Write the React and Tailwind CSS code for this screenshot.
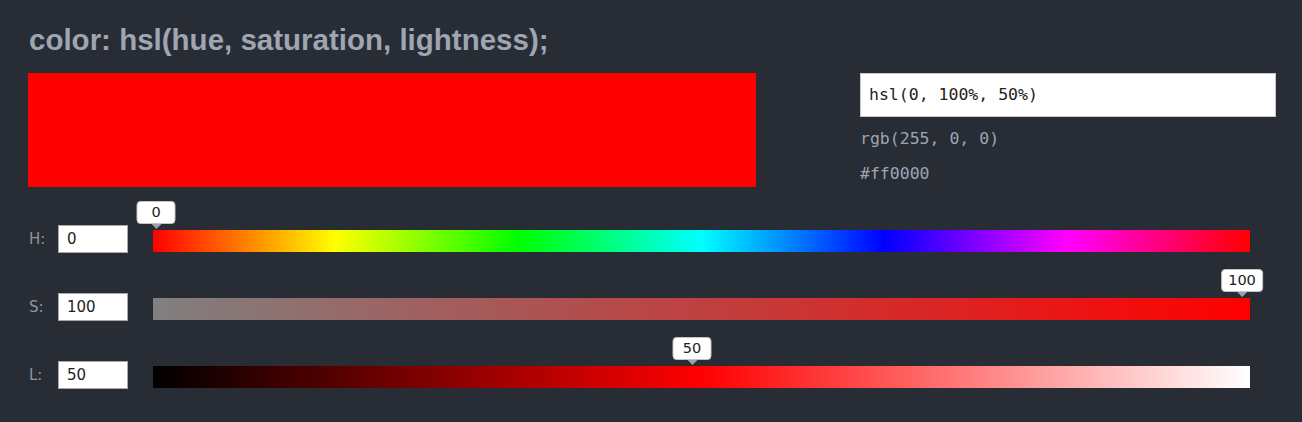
const rows = [
  {
    label: "H:",
    value: "0",
    tip: 3,
    bar: "linear-gradient(to right, #ff0000 0%, #ffff00 16.67%, #00ff00 33.33%, #00ffff 50%, #0000ff 66.67%, #ff00ff 83.33%, #ff0000 100%)",
  },
  {
    label: "S:",
    value: "100",
    tip: 1089,
    bar: "linear-gradient(to right, #808080, #ff0000)",
  },
  {
    label: "L:",
    value: "50",
    tip: 539,
    bar: "linear-gradient(to right, #000000, #ff0000 50%, #ffffff)",
  },
];

function SliderRow({ label, value, tip, bar }) {
  return (
    <div className="flex items-start">
      <span className="w-[30px] pl-[1px] pt-[3px] text-[15px] leading-[22px] text-[#8d96a5] [font-family:'DejaVu_Sans',sans-serif]">
        {label}
      </span>
      <div className="flex h-[28px] w-[70px] items-center border border-[#a9a9a9] bg-white pl-[8px] text-[15px] text-[#222] [font-family:'DejaVu_Sans',sans-serif]">
        {value}
      </div>
      <div className="relative ml-[25px] mt-[5px] h-[22px] w-[1097px]" style={{ background: bar }}>
        <div
          className="absolute bottom-[calc(100%+1px)] flex -translate-x-1/2 flex-col items-center"
          style={{ left: tip }}
        >
          <div className="flex h-[23px] min-w-[39px] items-center justify-center rounded-[4px] border border-[#c4c4c4] bg-white px-[6px] text-[14.5px] text-[#222] [font-family:'DejaVu_Sans',sans-serif]">
            {value}
          </div>
          <div className="h-0 w-0 border-x-[5px] border-t-[5px] border-x-transparent border-t-[#9aa3ad]" />
        </div>
      </div>
    </div>
  );
}

export default function App() {
  return (
    <div className="h-[422px] bg-[#282c35] pl-[28px] pt-[23px]">
      <h1 className="pl-[1px] text-[29.5px] font-bold leading-[34px] text-[#9ea5b3] [font-family:'Liberation_Sans',Arial,sans-serif]">
        color: hsl(hue, saturation, lightness);
      </h1>

      <div className="mt-[16px] flex items-start">
        <div className="h-[114px] w-[728px] bg-[#ff0000]" />
        <div className="ml-[104px] w-[416px] [font-family:'DejaVu_Sans_Mono',monospace]">
          <div className="flex h-[44px] items-center border border-[#c8c8c8] bg-white pl-[8px] text-[16.5px] text-[#222]">
            hsl(0, 100%, 50%)
          </div>
          <div className="mt-[10px] text-[16.5px] leading-[24px] text-[#9ea5b3]">rgb(255, 0, 0)</div>
          <div className="mt-[11px] text-[16.5px] leading-[24px] text-[#9ea5b3]">#ff0000</div>
        </div>
      </div>

      <div className="mt-[38px] flex flex-col gap-[40px]">
        {rows.map((r) => (
          <SliderRow key={r.label} {...r} />
        ))}
      </div>
    </div>
  );
}
